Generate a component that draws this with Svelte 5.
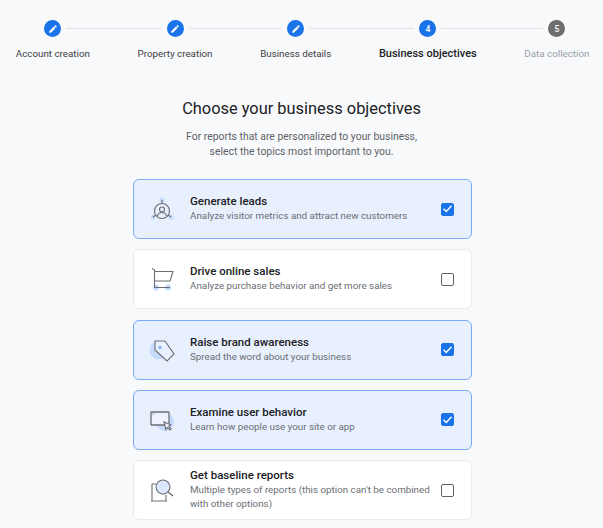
<script>
  const steps = [
    { label: 'Account creation', state: 'done' },
    { label: 'Property creation', state: 'done' },
    { label: 'Business details', state: 'done' },
    { label: 'Business objectives', state: 'active', num: 4 },
    { label: 'Data collection', state: 'todo', num: 5 }
  ];

  const objectives = [
    { icon: 'leads', title: 'Generate leads', desc: 'Analyze visitor metrics and attract new customers', checked: true },
    { icon: 'cart', title: 'Drive online sales', desc: 'Analyze purchase behavior and get more sales', checked: false },
    { icon: 'tag', title: 'Raise brand awareness', desc: 'Spread the word about your business', checked: true },
    { icon: 'screen', title: 'Examine user behavior', desc: 'Learn how people use your site or app', checked: true },
    { icon: 'search', title: 'Get baseline reports', desc: "Multiple types of reports (this option can't be combined with other options)", checked: false }
  ];
</script>

<div class="page">
  <div class="stepper">
    {#each steps as step, i}
      <div class="step {step.state}">
        <div class="head">
          <span class="line" class:hidden={i === 0}></span>
          <span class="dot">
            {#if step.state === 'done'}
              <svg width="10" height="10" viewBox="0 0 24 24"><path d="M3 17.25V21h3.75L17.81 9.94l-3.75-3.75L3 17.25zM20.71 7.04a1 1 0 0 0 0-1.41l-2.34-2.34a1 1 0 0 0-1.41 0l-1.83 1.83 3.75 3.75 1.83-1.83z" fill="#fff"/></svg>
            {:else}
              {step.num}
            {/if}
          </span>
          <span class="line" class:hidden={i === steps.length - 1}></span>
        </div>
        <div class="label">{step.label}</div>
      </div>
    {/each}
  </div>

  <h1>Choose your business objectives</h1>
  <p class="intro">For reports that are personalized to your business,<br />select the topics most important to you.</p>

  <div class="cards">
    {#each objectives as item}
      <div class="card" class:checked={item.checked}>
        <div class="icon">
          <svg width="36" height="36" viewBox="0 0 36 36" fill="none" stroke="#6a6e73" stroke-width="1.1">
            {#if item.icon === 'leads'}
              <circle cx="16" cy="9" r="2.500" fill="#c6dafc" stroke="none" />
              <circle cx="7" cy="26" r="2.500" fill="#c6dafc" stroke="none" />
              <circle cx="25" cy="26" r="2.500" fill="#c6dafc" stroke="none" />
              <circle cx="16" cy="20" r="7.500" />
              <circle cx="16" cy="18.500" r="2.500" />
              <path d="M11.500 25c.6-2.500 2.300-3.500 4.500-3.500s3.900 1 4.500 3.500" />
              <path d="M16 9v3.500M7 26l3-2M25 26l-3-2" />
            {:else if item.icon === 'cart'}
              <circle cx="10" cy="26.500" r="3" fill="#c6dafc" stroke="none" />
              <circle cx="22" cy="26.500" r="3" fill="#c6dafc" stroke="none" />
              <path d="M6 7.500l2.500 1.500v17.500h15.500" />
              <path d="M8.500 10.500h18.500l-3 9.500h-15.500" />
            {:else if item.icon === 'tag'}
              <circle cx="13" cy="18" r="9.500" fill="#c6dafc" stroke="none" />
              <path d="M9 9h10l9 13-7 7-12-11z" fill="#eaf1fe" />
              <circle cx="14" cy="15.500" r="1.700" fill="#8ab4f8" stroke="none" />
            {:else if item.icon === 'screen'}
              <circle cx="19" cy="20" r="9" fill="#c6dafc" stroke="none" />
              <rect x="5" y="10" width="18" height="13" rx="0.500" fill="#eef3fe" stroke-width="1.300" />
              <path d="M6.500 12h2" stroke="#9aa0a6" />
              <path d="M18 20l2 7.500 1.500-2 2.500 2.500 1.200-1.200-2.500-2.500 2-1.500z" fill="#eef3fe" />
            {:else}
              <path d="M6 12v17M5 29h16M6 12h4M20 23v6" />
              <circle cx="17" cy="15" r="7" fill="#dbe7fd" />
              <path d="M22 20l5 4" stroke-width="1.500" />
            {/if}
          </svg>
        </div>
        <div class="text">
          <div class="title">{item.title}</div>
          <div class="desc">{item.desc}</div>
        </div>
        <span class="box">
          {#if item.checked}
            <svg width="13" height="13" viewBox="0 0 13 13" fill="none"><path d="M2.500 6.800l2.700 2.700 5.300-5.700" stroke="#fff" stroke-width="1.400" /></svg>
          {/if}
        </span>
      </div>
    {/each}
  </div>
</div>

<style>
  :global(body) {
    margin: 0;
    background: #f8f9fb;
  }

  .page {
    width: 603px;
    height: 528px;
    overflow: hidden;
    font-family: Roboto, "Liberation Sans", sans-serif;
    color: #202124;
  }

  .stepper {
    display: flex;
    margin-left: -8px;
    padding-top: 20px;
  }

  .step {
    flex: none;
    padding: 0 23.8px;
  }

  .head {
    display: flex;
    align-items: center;
    height: 17px;
    margin: 0 -23.8px;
  }

  .line {
    flex: 1;
    height: 1px;
    background: #dfe1e5;
  }

  .line.hidden {
    visibility: hidden;
  }

  .dot {
    flex: none;
    width: 17px;
    height: 17px;
    margin: 0 5px;
    border-radius: 50%;
    background: #1a73e8;
    color: #fff;
    display: flex;
    align-items: center;
    justify-content: center;
    font-size: 8.5px;
    font-weight: 500;
  }

  .todo .dot {
    background: #6e6e70;
  }

  .label {
    margin-top: 9px;
    font-size: 9.8px;
    line-height: 16px;
    color: #3c4043;
    white-space: nowrap;
    text-align: center;
  }

  .active .label {
    font-size: 11px;
    font-weight: 500;
    color: #202124;
  }

  .todo .label {
    color: #9aa0a6;
  }

  h1 {
    margin: 35px 0 0;
    font-size: 16.4px;
    line-height: 24px;
    font-weight: 400;
    text-align: center;
  }

  .intro {
    margin: 8px 0 0;
    font-size: 10.4px;
    line-height: 15px;
    color: #5f6368;
    text-align: center;
  }

  .cards {
    display: flex;
    flex-direction: column;
    gap: 10.3px;
    width: 339px;
    margin: 20px 0 0 133px;
  }

  .card {
    box-sizing: border-box;
    height: 60px;
    display: flex;
    align-items: center;
    padding: 0 18px 0 12px;
    background: #fff;
    border: 1px solid #e8eaed;
    border-radius: 6px;
  }

  .card.checked {
    background: #e8f0fe;
    border-color: #7baaf7;
  }

  .icon {
    flex: none;
    width: 36px;
    height: 36px;
    margin-right: 8px;
  }

  .text {
    flex: 1;
    min-width: 0;
    padding-bottom: 1px;
  }

  .title {
    font-size: 11.5px;
    line-height: 14px;
    font-weight: 500;
    color: #202124;
  }

  .desc {
    margin-top: 1px;
    font-size: 9.8px;
    line-height: 14px;
    color: #6b6f75;
  }

  .box {
    flex: none;
    width: 13px;
    height: 13px;
    margin-left: 8px;
    margin-right: -1px;
    box-sizing: border-box;
    border: 1.5px solid #5f6368;
    border-radius: 2px;
    background: #fff;
    position: relative;
  }

  .checked .box {
    background: #1a73e8;
    border-color: #1a73e8;
  }

  .box svg {
    position: absolute;
    left: -1.5px;
    top: -1.5px;
  }
</style>
